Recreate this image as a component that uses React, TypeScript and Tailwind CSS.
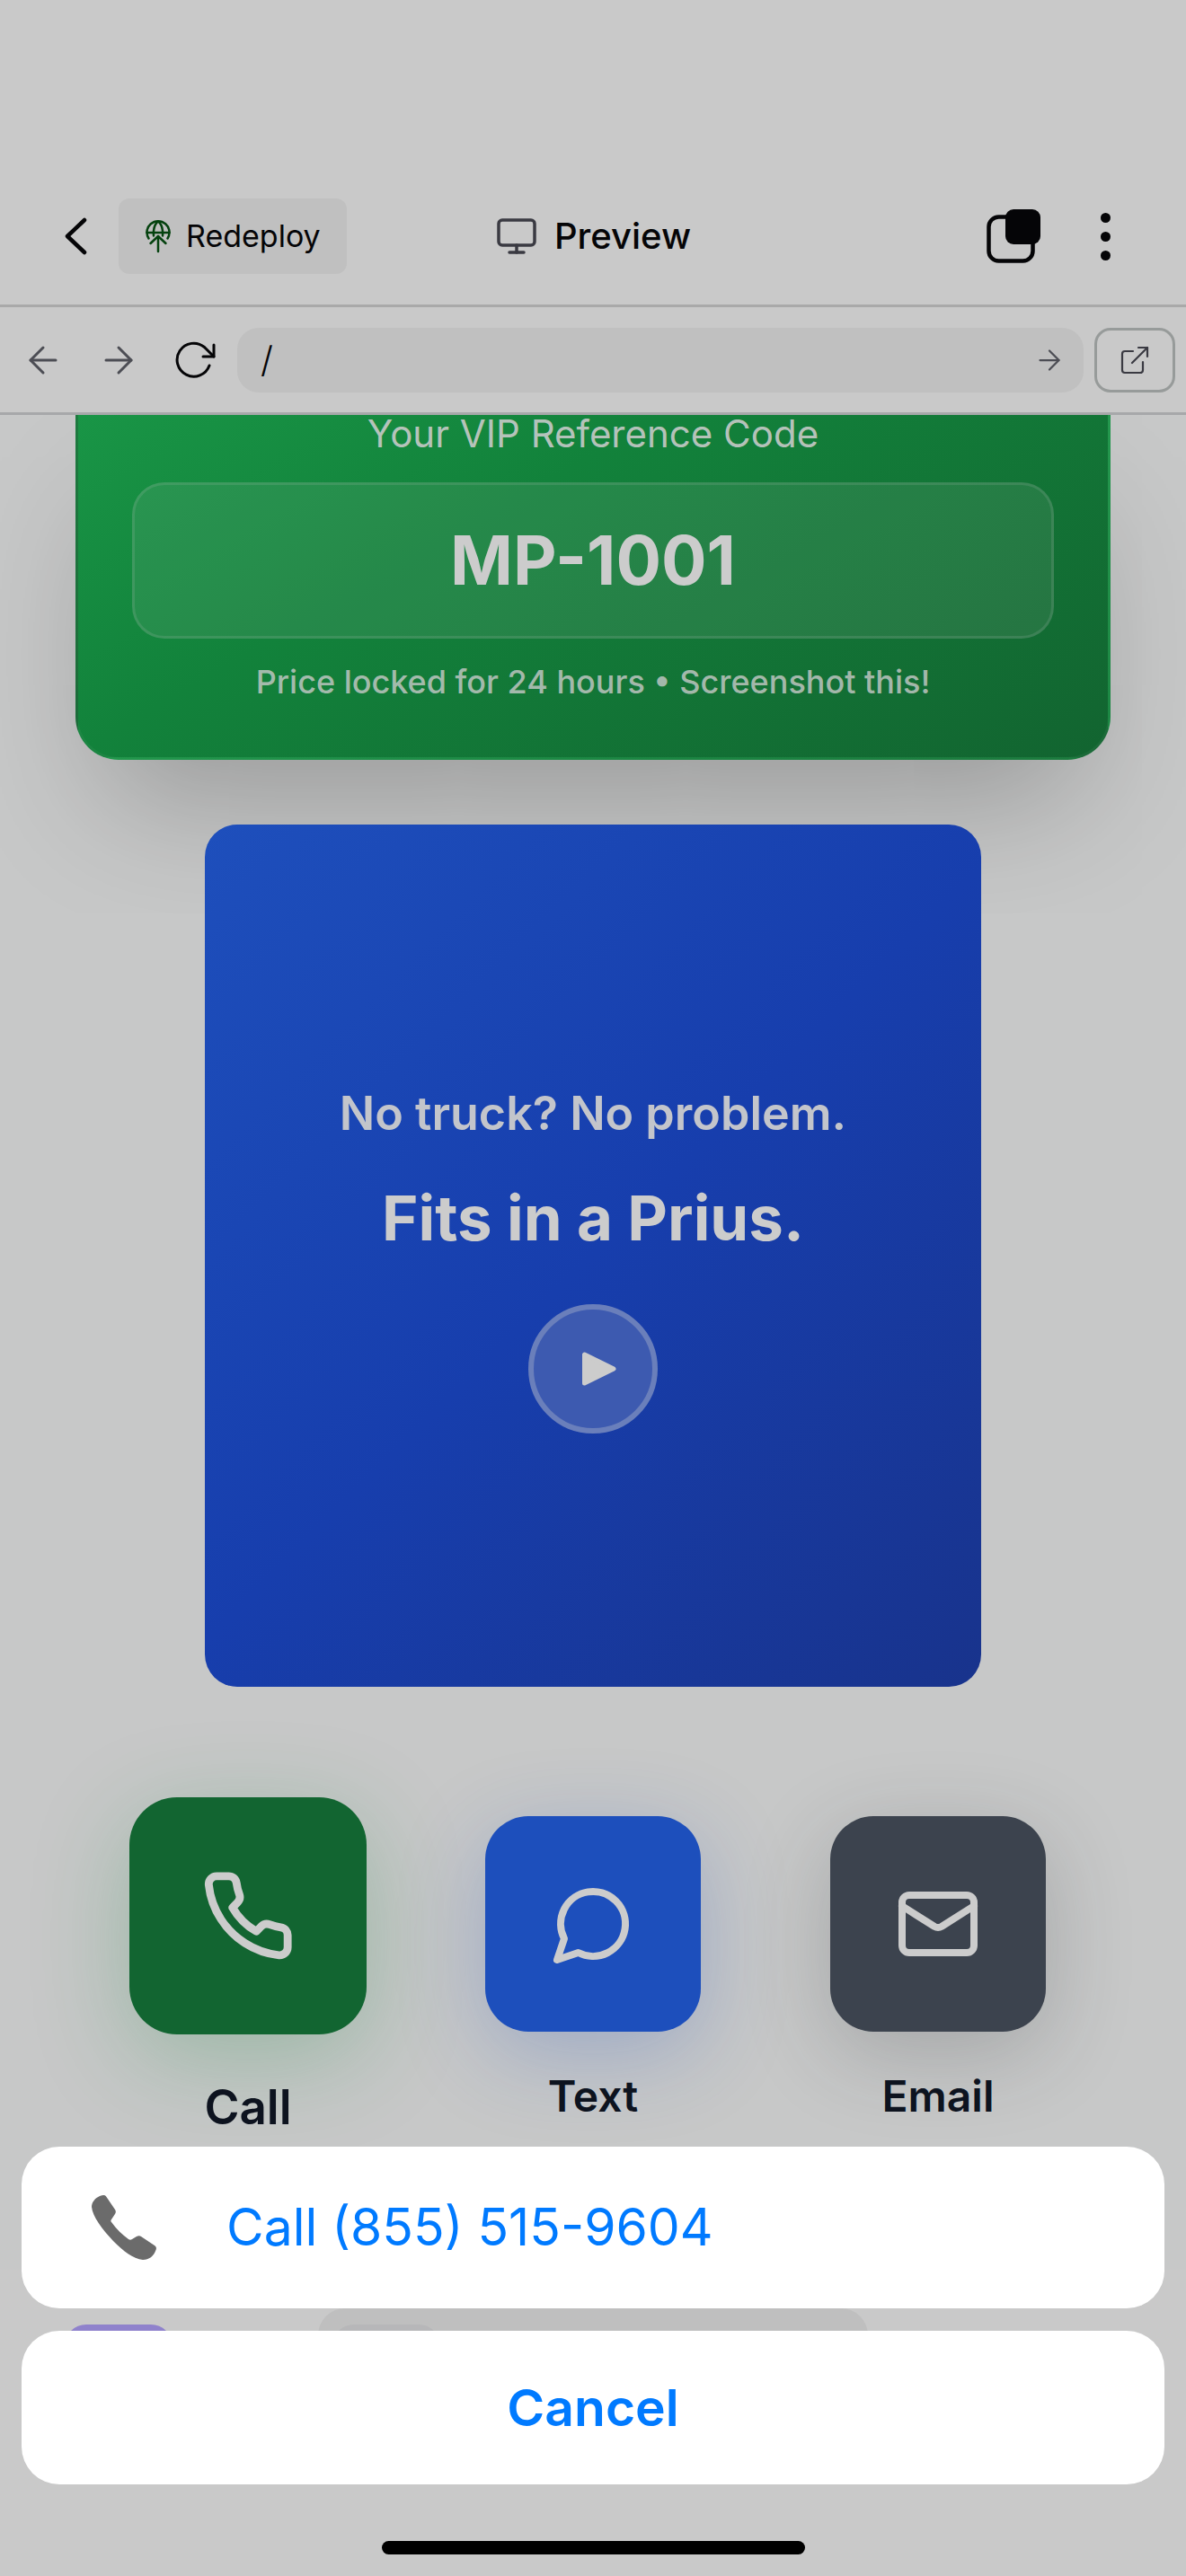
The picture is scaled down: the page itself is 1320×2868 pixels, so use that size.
import { ArrowLeft, ArrowRight, Mail, Monitor } from "lucide-react";
import type { ReactNode } from "react";

function DeployIcon() {
  return (
    <svg viewBox="0 0 30 38" className="h-[38px] w-[30px]" fill="none" stroke="#05420f" strokeWidth="2.5" strokeLinecap="round" strokeLinejoin="round">
      <path d="M4.500 21.500A12.500 12.500 0 1 1 25.500 21.500" />
      <path d="M2.500 15h25" />
      <path d="M10 18.500C9.500 11 11 5.500 15 2.500C19 5.500 20.500 11 20 18.500" />
      <path d="M15 36V19" />
      <path d="M6.500 27l8.500-8 8.500 8" />
    </svg>
  );
}

function PhoneOutline() {
  return (
    <svg viewBox="0 0 24 24" className="size-[106px]" fill="none" stroke="currentColor" strokeWidth="2" strokeLinecap="round" strokeLinejoin="round">
      <path d="M22 16.92v3a2 2 0 0 1-2.18 2 19.79 19.79 0 0 1-8.63-3.070 19.500 19.500 0 0 1-6-6 19.790 19.790 0 0 1-3.070-8.670A2 2 0 0 1 4.110 2h3a2 2 0 0 1 2 1.720 12.840 12.840 0 0 0 .7 2.810 2 2 0 0 1-.45 2.110L8.090 9.910a16 16 0 0 0 6 6l1.270-1.270a2 2 0 0 1 2.110-.45 12.840 12.840 0 0 0 2.810.7A2 2 0 0 1 22 16.920z" />
    </svg>
  );
}

function BubbleOutline() {
  return (
    <svg viewBox="0 0 24 24" className="size-24" fill="none" stroke="currentColor" strokeWidth="2" strokeLinecap="round" strokeLinejoin="round">
      <path d="M7.9 20A9 9 0 1 0 4 16.1L2 22Z" />
    </svg>
  );
}

function Header() {
  return (
    <header className="grid h-[342px] shrink-0 grid-cols-[1fr_auto_1fr] items-center border-b-3 border-[#a9a9a9] px-[70px] pt-[187px] text-[#050507]">
      <div className="flex items-center gap-8">
        <button aria-label="Back" className="flex w-[30px] justify-center">
          <svg viewBox="0 0 30 44" className="h-11 w-[30px]" fill="none" stroke="currentColor" strokeWidth="4.500" strokeLinecap="round" strokeLinejoin="round">
            <path d="M24 4 5 22l19 18" />
          </svg>
        </button>
        <button className="flex h-[84px] items-center gap-4 rounded-xl bg-[#c0c0c0] px-[29px] text-[34px] leading-[42px]">
          <DeployIcon />
          Redeploy
        </button>
      </div>
      <div className="flex items-center gap-[18px]">
        <Monitor className="size-12 text-[#3a3a42]" strokeWidth={1.75} />
        <h1 className="text-[40px] leading-[48px] font-medium">Preview</h1>
      </div>
      <div className="flex items-center justify-end gap-[52px]">
        <button aria-label="Switch tab" className="mr-0">
          <svg viewBox="0 0 60 60" className="size-[60px]">
            <rect x="2.500" y="8.500" width="49" height="49" rx="11" fill="none" stroke="#050507" strokeWidth="4.500" />
            <rect x="21" y="0" width="39" height="39" rx="9" fill="#050507" />
          </svg>
        </button>
        <button aria-label="More" className="flex w-10 flex-col items-center gap-2.5">
          <span className="size-[11px] rounded-full bg-[#050507]" />
          <span className="size-[11px] rounded-full bg-[#050507]" />
          <span className="size-[11px] rounded-full bg-[#050507]" />
        </button>
      </div>
    </header>
  );
}

function AddressBar() {
  return (
    <nav className="relative flex h-[120px] shrink-0 items-center border-b-3 border-[#a7a8aa] bg-[#c9c9c9] pr-3 pl-6 text-[#4c4d54]">
      <button aria-label="Go back" className="flex w-[84px]">
        <ArrowLeft className="size-12" strokeWidth={1.5} />
      </button>
      <button aria-label="Go forward" className="flex w-[84px]">
        <ArrowRight className="size-12" strokeWidth={1.5} />
      </button>
      <button aria-label="Reload" className="flex w-[72px] text-[#050507]">
        <svg viewBox="0 0 48 48" className="size-12" fill="none" stroke="currentColor" strokeWidth="3" strokeLinecap="round" strokeLinejoin="round">
          <path d="M41 30A18.500 18.500 0 1 1 35.500 9.500L46 20" />
          <path d="M46 7v13H34" />
        </svg>
      </button>
      <div className="flex h-[72px] flex-1 items-center rounded-3xl bg-[#c0c0c0] pr-5 pl-[26px]">
        <input aria-label="Path" defaultValue="/" className="min-w-0 flex-1 bg-transparent text-[40px] leading-[48px] font-light text-[#050507] outline-none" />
        <button aria-label="Go">
          <ArrowRight className="size-9" strokeWidth={1.5} />
        </button>
      </div>
      <button aria-label="Open in new tab" className="ml-3 flex h-[72px] w-[90px] items-center justify-center rounded-[18px] border-3 border-[#979b9a]">
        <svg viewBox="0 0 36 36" className="size-9" fill="none" stroke="#3a3a42" strokeWidth="2.200" strokeLinecap="round" strokeLinejoin="round">
          <path d="M16 8H7a3 3 0 0 0-3 3v18a3 3 0 0 0 3 3h17a3 3 0 0 0 3-3v-9" />
          <path d="M22 4h10v10" />
          <path d="M32 4 15 21" />
        </svg>
      </button>
    </nav>
  );
}

function CodeCard() {
  return (
    <section className="rounded-b-[48px] border-3 border-t-0 border-[#cccccc]/6 bg-linear-150 from-[#199546] via-[#12823b] via-36% to-[#126430] px-[60px] pb-[60px] text-center shadow-[0_75px_150px_-36px_rgba(0,0,0,0.25)]">
      <p className="relative text-[42px] leading-[42px] text-[#cccccc]/90">Your VIP Reference Code</p>
      <p className="mt-[33px] flex h-[174px] items-center justify-center rounded-[36px] border-3 border-[#cccccc]/15 bg-[#cccccc]/10 text-[75px] font-bold text-[#cccccc]">
        MP-1001
      </p>
      <p className="mt-6 text-4xl leading-[48px] font-medium text-[#cccccc]/80">Price locked for 24 hours • Screenshot this!</p>
    </section>
  );
}

function VideoCard() {
  return (
    <section className="mx-36 mt-[72px] flex h-[960px] flex-col items-center justify-center rounded-[36px] bg-linear-135 from-[#1e4fbc] via-[#173ead] to-[#18338c] text-[#cccccc]">
      <p className="text-[52px] leading-[80px] font-semibold text-[#cccccc]/95">No truck? No problem.</p>
      <p className="mt-8 text-[69px] leading-[88px] font-bold">Fits in a Prius.</p>
      <button aria-label="Play video" className="mt-[52px] flex size-36 items-center justify-center rounded-full border-6 border-[#6a7fbb] bg-[#3d5ab0]">
        <svg viewBox="0 0 60 60" className="size-[60px]" fill="currentColor" stroke="currentColor" strokeWidth="5" strokeLinejoin="round">
          <path d="M20.500 14v32L53 30z" />
        </svg>
      </button>
    </section>
  );
}

function Contact({ label, tile, icon, labelClass }: { label: string; tile: string; icon: ReactNode; labelClass: string }) {
  return (
    <button className="flex flex-col items-center gap-12 text-[#0d131f]">
      <span className={"flex items-center justify-center text-[#cccccc] " + tile}>{icon}</span>
      <span className={"font-semibold " + labelClass}>{label}</span>
    </button>
  );
}

function ContactRow() {
  return (
    <section className="mt-[123px] grid grid-cols-3 items-center">
      <Contact label="Call" icon={<PhoneOutline />} tile="size-[264px] rounded-[53px] bg-[#126531] shadow-[0_26px_106px_rgba(18,130,59,0.25)]" labelClass="text-[53px] leading-[66px]" />
      <Contact label="Text" icon={<BubbleOutline />} tile="size-60 rounded-[48px] bg-[#1d4fbc] shadow-[0_24px_96px_rgba(30,79,188,0.25)]" labelClass="text-5xl leading-12" />
      <Contact label="Email" icon={<Mail className="size-24" />} tile="size-60 rounded-[48px] bg-[#3c434e] shadow-[0_24px_96px_rgba(40,44,52,0.22)]" labelClass="text-5xl leading-12" />
    </section>
  );
}

function BottomTabs() {
  return (
    <div className="flex h-[341px] shrink-0 items-start bg-[#c9c9c9] pt-[43px] pl-[72px]">
      <span className="mt-[18px] size-[120px] rounded-3xl bg-[#8f82cc]" />
      <div className="ml-[162px] w-[612px] rounded-[30px] bg-[#bfbfbf] px-4 py-[18px]">
        <div className="size-[120px] rounded-3xl bg-[#b7b7b9]" />
      </div>
    </div>
  );
}

function ActionSheet() {
  return (
    <div role="dialog" aria-label="Call options" className="absolute inset-x-0 bottom-0 flex flex-col px-6 pb-6 text-[57px] leading-[72px] text-[#007aff]">
      <button className="flex h-[180px] items-center rounded-[42px] bg-white pl-[78px]">
        <svg viewBox="0 0 72 72" className="mr-[78px] size-[72px]" fill="#6b6b6b">
          <path d="M9 1C13 -.5 15 -.3 16.500 2L26 16C27.200 18 27 19.500 26 21L22 27C21 28.500 21.200 29 22 30C28 38 34 44 41 49C42.500 50 43.500 50 45 49L50 46C52 45 53.500 45 55 46L70 56C72 57.500 72.300 59 71.500 61C69 68 64 72 57 72C46 71 35 62 24 51C12 38 1 24 0 13C0 8 4 3 9 1Z" />
        </svg>
        Call (855) 515-9604
      </button>
      <button className="mt-[25px] h-[171px] rounded-[42px] bg-white font-semibold">Cancel</button>
      <div className="mt-[63px] h-[15px] w-[471px] self-center rounded-full bg-black" />
    </div>
  );
}

export default function App() {
  return (
    <div className="relative flex h-screen flex-col overflow-hidden bg-[#c9c9c9] font-[Inter,sans-serif]">
      <Header />
      <AddressBar />
      <main className="min-h-0 flex-1 bg-[#c7c8c8] px-[84px]">
        <CodeCard />
        <VideoCard />
        <ContactRow />
      </main>
      <BottomTabs />
      <ActionSheet />
    </div>
  );
}
